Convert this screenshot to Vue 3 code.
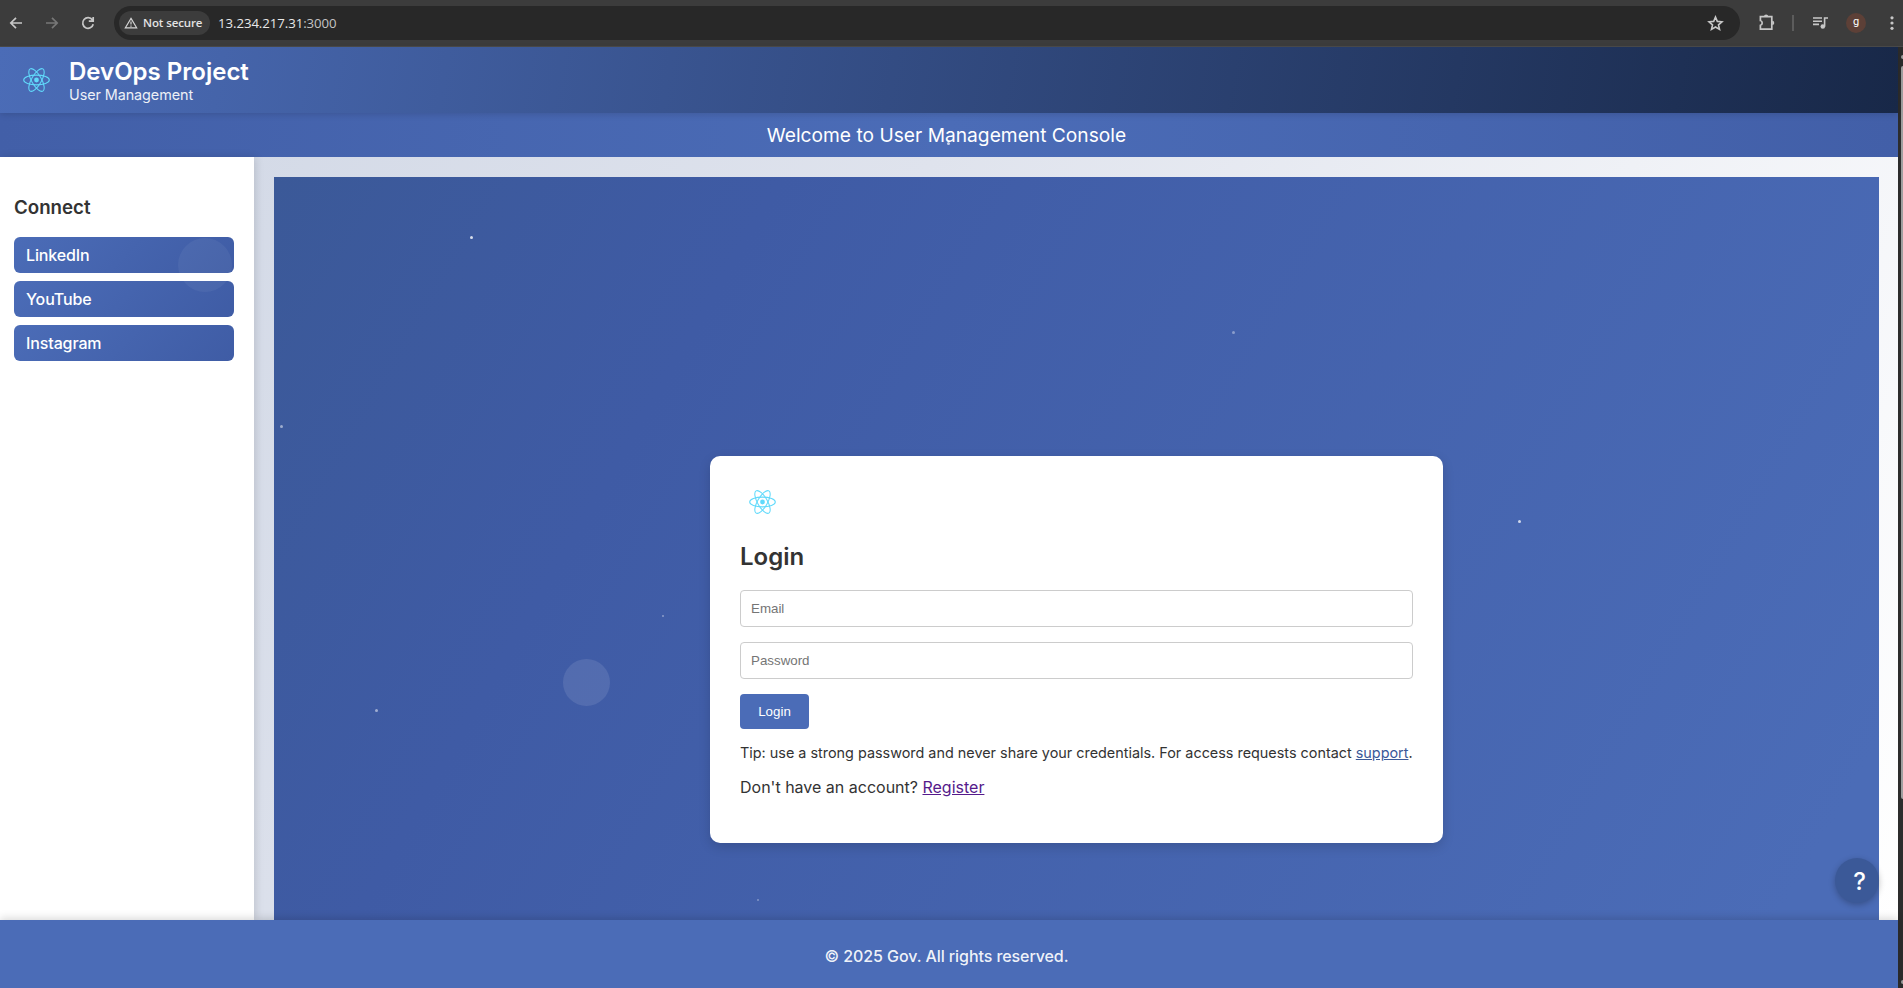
<script setup>
const links = ['LinkedIn', 'YouTube', 'Instagram']
const particles = [
  { x: 471.5, y: 237.5, s: 3, o: 0.8 },
  { x: 281.5, y: 426.5, s: 3, o: 0.5 },
  { x: 1233.5, y: 332.5, s: 3, o: 0.38 },
  { x: 1519.5, y: 521.5, s: 3, o: 0.75 },
  { x: 376.5, y: 710.5, s: 3, o: 0.5 },
  { x: 662.5, y: 615.5, s: 2, o: 0.4 },
  { x: 757.5, y: 899.5, s: 2, o: 0.35 },
  { x: 948.5, y: 143.5, s: 3, o: 0.7 },
  { x: 205, y: 265, s: 54, o: 0.05 },
  { x: 586, y: 682.5, s: 47, o: 0.1 }
]
const place = (p) => ({
  left: p.x - p.s / 2 + 'px',
  top: p.y - p.s / 2 + 'px',
  width: p.s + 'px',
  height: p.s + 'px',
  opacity: p.o
})
</script>

<template>
  <div class="window">
    <div class="toolbar">
      <svg class="ico back" viewBox="0 0 16 16"><path d="M14 8H3M8 2.8 2.8 8 8 13.2" /></svg>
      <svg class="ico forward" viewBox="0 0 16 16"><path d="M2 8h11M8 2.8 13.2 8 8 13.2" /></svg>
      <svg class="ico reload" viewBox="0 0 16 16"><path d="M13.2 9.2A5.3 5.3 0 1 1 12.4 5M13.2 2v4.2H8.8" /></svg>
      <div class="omnibox">
        <div class="chip">
          <svg class="warn" viewBox="0 0 16 14"><path d="M8 1.6 14.6 12.6H1.4Z" /><path d="M8 5.2v3.6M8 9.8v1.5" /></svg>
          <span>Not secure</span>
        </div>
        <span class="url">13.234.217.31<i>:3000</i></span>
        <svg class="star" viewBox="0 0 16 16"><path d="M8 1.9 9.7 6l4.4.4-3.3 2.9 1 4.3L8 11.3l-3.8 2.3 1-4.3L1.9 6.4 6.3 6Z" /></svg>
      </div>
      <svg class="puzzle" viewBox="0 0 18 18"><path d="M2.4 3.6h11.4v12.6H2.4v-3.9a2.5 2.5 0 0 0 0-4.8Z" /><path class="fill" d="M6 3.5a2.1 2.1 0 0 1 4.2 0ZM14.2 7.8a2.1 2.1 0 0 1 0 4.2Z" /></svg>
      <span class="rule"></span>
      <svg class="media" viewBox="0 0 16 14"><path d="M1 2h9M1 5.2h9M1 8.4h6M12.6 10.5V2H16" /><circle cx="10.8" cy="10.5" r="2.3" /></svg>
      <span class="avatar">g</span>
      <svg class="more" viewBox="0 0 4 14"><circle cx="2" cy="1.8" r="1.6" /><circle cx="2" cy="7" r="1.6" /><circle cx="2" cy="12.3" r="1.6" /></svg>
    </div>

    <div class="viewport">
      <div class="page">
        <header class="header">
          <svg class="logo" viewBox="-11.5 -10.3 23 20.6"><circle r="2.05" /><g><ellipse rx="11" ry="4.2" /><ellipse rx="11" ry="4.2" transform="rotate(60)" /><ellipse rx="11" ry="4.2" transform="rotate(120)" /></g></svg>
          <div class="brand">
            <div class="title">DevOps Project</div>
            <div class="subtitle">User Management</div>
          </div>
        </header>
        <div class="welcome"><span>Welcome to User Management Console</span></div>
        <div class="body">
          <aside class="sidebar">
            <h3>Connect</h3>
            <a v-for="l in links" :key="l" class="social">{{ l }}</a>
          </aside>
          <main class="main">
            <div class="stage">
              <section class="card">
                <svg class="logo" viewBox="-11.5 -10.3 23 20.6"><circle r="2.05" /><g><ellipse rx="11" ry="4.2" /><ellipse rx="11" ry="4.2" transform="rotate(60)" /><ellipse rx="11" ry="4.2" transform="rotate(120)" /></g></svg>
                <h2>Login</h2>
                <input type="email" placeholder="Email" />
                <input type="password" placeholder="Password" />
                <button>Login</button>
                <p class="tip"><span>Tip: use a strong password and never share your credentials. For access requests contact <a>support</a>.</span></p>
                <p class="register"><span>Don't have an account? <a>Register</a></span></p>
              </section>
            </div>
          </main>
        </div>
        <footer class="footer"><span>© 2025 Gov. All rights reserved.</span></footer>
      </div>
      <div class="scrollbar">
        <span class="arrow up"></span>
        <span class="thumb"></span>
        <span class="arrow down"></span>
      </div>
    </div>

    <span v-for="(p, i) in particles" :key="i" class="particle" :style="place(p)"></span>
    <div class="help">?</div>
  </div>
</template>

<style>
body { margin: 0; overflow: hidden; }
</style>

<style scoped>
* { box-sizing: border-box; }
.window { position: relative; width: 1903px; height: 988px; overflow: hidden; display: flex; flex-direction: column; font-family: Inter, "Liberation Sans", sans-serif; color: #333; }
.toolbar { height: 47px; flex: none; background: #3c3c3c; border-bottom: 1px solid #4a4a4a; display: flex; align-items: center; font-family: "Open Sans", "Noto Sans", sans-serif; }
svg { display: block; flex: none; fill: none; }
.ico { width: 16px; height: 16px; stroke: #c7c7c7; stroke-width: 1.7; }
.back { margin-left: 8px; }
.forward { margin-left: 20px; stroke: #777; }
.reload { margin-left: 20px; }
.omnibox { margin-left: 18px; width: 1626px; height: 34px; border-radius: 17px; background: #282828; display: flex; align-items: center; padding-left: 5px; }
.chip { width: 91px; height: 24px; border-radius: 12px; background: #3c3c3c; display: flex; align-items: center; padding: 0 0 1px 5px; color: #e3e3e3; font-size: 11.5px; font-weight: 600; white-space: nowrap; letter-spacing: -0.1px; }
.warn { width: 14px; height: 12px; margin-right: 5px; stroke: #d5d5d5; stroke-width: 1.4; }
.url { margin-left: 8px; padding-bottom: 1px; font-size: 13.2px; color: #e8e8e8; letter-spacing: -0.05px; }
.url i { font-style: normal; color: #c4c4c4; }
.star { width: 17px; height: 17px; margin-left: auto; margin-right: 16px; stroke: #c7c7c7; stroke-width: 1.5; }
.puzzle { width: 18px; height: 18px; margin: 0 0 2px 18px; stroke: #c7c7c7; stroke-width: 1.7; }
.puzzle .fill { fill: #c7c7c7; stroke: none; }
.rule { width: 2px; height: 16px; background: #5c5c5c; margin-left: 16px; }
.media { width: 16px; height: 14px; margin-left: 18px; stroke: #c7c7c7; stroke-width: 1.6; }
.media circle { fill: #c7c7c7; stroke: none; }
.avatar { width: 20px; height: 20px; border-radius: 50%; background: #5d4037; color: #fff; font: 11px/18px Roboto, sans-serif; text-align: center; margin-left: 18px; }
.more { width: 4px; height: 14px; margin-left: 24px; fill: #c7c7c7; }

.viewport { flex: 1; display: flex; min-height: 0; }
.page { width: 1898px; display: flex; flex-direction: column; }
.header { height: 66px; flex: none; display: flex; align-items: center; padding-left: 23px; background: linear-gradient(100deg, #4b6cb7 0%, #182848 100%); box-shadow: 0 2px 6px rgba(0, 0, 0, 0.12); position: relative; }
.logo { width: 27px; height: 24px; }
.logo circle { fill: #61dafb; }
.logo g { stroke: #61dafb; stroke-width: 0.9; }
.brand { margin-left: 19px; color: #fff; }
.title { font-size: 24px; font-weight: 600; line-height: 26px; padding-top: 2px; white-space: nowrap; }
.subtitle { font-size: 14.4px; line-height: 18px; opacity: 0.9; letter-spacing: -0.08px; padding-top: 1px; }
.welcome { height: 44px; flex: none; background: linear-gradient(90deg, #425fa8 0%, #4b6cb7 50%, #425fa8 100%); color: #fff; font-size: 19.2px; display: flex; align-items: center; justify-content: center; padding-right: 5px; }
.body { flex: 1; display: flex; min-height: 0; background: linear-gradient(120deg, #d0d7e5 0%, #dfe3ed 40%, #fff 100%); }
.sidebar { width: 254px; background: #fff; padding: 37px 20px 0 14px; display: flex; flex-direction: column; box-shadow: 2px 0 8px rgba(0, 0, 0, 0.12); }
h3 { margin: 0 0 15px; font-size: 18.72px; line-height: 28px; font-weight: 600; }
.social { height: 36px; margin-bottom: 8px; border-radius: 6px; background: linear-gradient(135deg, #4b6cb7, #3f5ca5); color: #fff; font-size: 16px; line-height: 36px; padding-left: 12px; font-weight: 500; letter-spacing: -0.12px; }
.main { flex: 1; display: flex; padding: 20px 19px 0 20px; }
.stage { flex: 1; background: linear-gradient(120deg, #3b5998, #3f5ba5 25%, #4b6cb7 95%); padding: 279px 0 0 436px; }
.card { width: 733px; height: 387px; border-radius: 10px; background: #fff; padding: 34px 30px 0; box-shadow: 0 4px 12px rgba(0, 0, 0, 0.15); display: flex; flex-direction: column; align-items: flex-start; }
.card .logo { margin-left: 9px; }
h2 { margin: 27px 0 17px; font-size: 24px; line-height: 32px; font-weight: 600; }
input { width: 673px; height: 37px; margin: 0 0 15px; padding: 0 10px; border: 1px solid #ccc; border-radius: 4px; font: 13.33px "Liberation Sans", Arial, sans-serif; background: #fff; }
input::placeholder { color: #757575; }
button { width: 69px; height: 35px; border: 0; padding: 0; border-radius: 4px; background: #4b6cb7; color: #fff; font: 13.33px "Liberation Sans", Arial, sans-serif; }
p { margin: 0; white-space: nowrap; }
.tip { margin-top: 13px; font-size: 14.4px; line-height: 22px; }
.tip a { color: #3b5998; text-decoration: underline; }
.register { margin-top: 11px; font-size: 16px; line-height: 24px; }
.register a { color: #551a8b; text-decoration: underline; }
.footer { height: 68px; flex: none; position: relative; background: #4b6cb7; color: rgba(255, 255, 255, 0.93); font-size: 16px; font-weight: 500; letter-spacing: -0.08px; display: flex; align-items: center; justify-content: center; padding: 3px 5px 0 0; box-shadow: 0 -2px 8px rgba(0, 0, 0, 0.15); }
.scrollbar { flex: 1; background: #2c2c2c; display: flex; flex-direction: column; align-items: flex-end; padding: 8px 0 4px; overflow: hidden; }
.thumb { width: 2px; height: 733px; margin-top: 7px; background: #9f9f9f; border-radius: 2px 0 0 2px; }
.arrow { width: 2px; height: 4px; background: #9f9f9f; border-radius: 2px 0 0 2px; }
.down { margin-top: auto; }
.particle { position: absolute; border-radius: 50%; background: #fff; }
.help { position: absolute; left: 1835px; top: 858px; width: 44px; height: 45px; padding-left: 5px; border-radius: 50%; background: #3b5998; color: #fff; font-size: 24px; line-height: 47px; text-align: center; box-shadow: 0 2px 6px rgba(0, 0, 0, 0.25); font-weight: 500; }
</style>
